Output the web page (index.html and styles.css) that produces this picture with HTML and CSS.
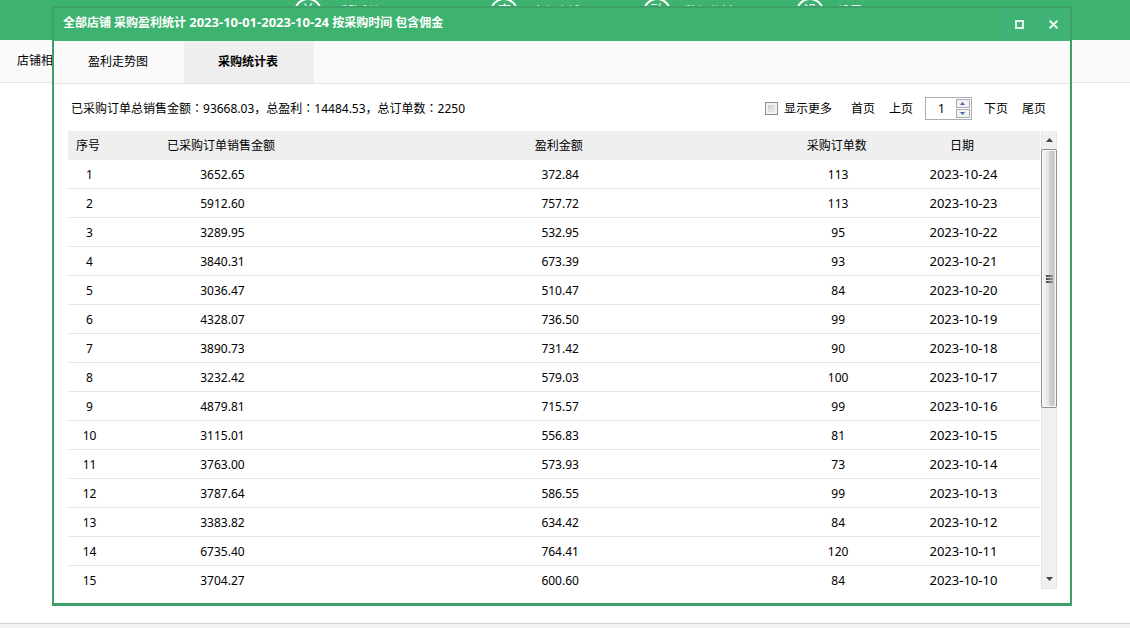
FILE: index.html
```
<!DOCTYPE html>
<html lang="zh-CN">
<head>
<meta charset="utf-8">
<title>采购盈利统计</title>
<link rel="stylesheet" href="styles.css">
</head>
<body>
<div class="app">
  <nav class="topnav">
    <a class="topnav-item" href="#"><span class="badge">关</span>采购利润</a>
    <a class="topnav-item" href="#"><span class="badge">店</span>全部店铺</a>
    <a class="topnav-item" href="#"><span class="badge">动</span>数据分析</a>
    <a class="topnav-item" href="#"><span class="badge">设</span>设置</a>
  </nav>
  <nav class="subnav"><a href="#">店铺相关</a></nav>
  <main class="backdrop"></main>
  <footer class="statusbar"></footer>
</div>

<section class="window" role="dialog" aria-labelledby="win-title">
  <header class="titlebar">
    <h1 id="win-title">全部店铺 采购盈利统计 <span class="date">2023-10-01-2023-10-24</span> 按采购时间 包含佣金</h1>
    <button class="winbtn" type="button" aria-label="最大化"><svg width="9" height="9" viewBox="0 0 9 9"><rect x="1" y="1" width="7" height="7" fill="none" stroke="#e2f5ea" stroke-width="2"/></svg></button>
    <button class="winbtn" type="button" aria-label="关闭"><svg width="9" height="9" viewBox="0 0 9 9"><path d="M.6.6l7.8 7.8M8.4.6L.6 8.4" stroke="#e8f8ee" stroke-width="2"/></svg></button>
  </header>
  <div class="tabs" role="tablist">
    <button class="tab" type="button" role="tab" aria-selected="false">盈利走势图</button>
    <button class="tab active" type="button" role="tab" aria-selected="true">采购统计表</button>
  </div>
  <div class="content">
    <div class="toolbar">
      <p class="summary">已采购订单总销售金额<span class="colon" lang="zh-TW">：</span>93668.03，总盈利<span class="colon" lang="zh-TW">：</span>14484.53，总订单数<span class="colon" lang="zh-TW">：</span>2250</p>
      <label class="more"><input type="checkbox">显示更多</label>
      <div class="pager">
        <a href="#">首页</a>
        <a href="#">上页</a>
        <div class="spinner">
          <input type="text" value="1" aria-label="页码">
          <div class="steps">
            <button type="button" aria-label="增加"><svg width="5" height="3" viewBox="0 0 5 3"><path d="M0 3L2.500 0 5 3z" fill="#4a62a8"/></svg></button>
            <button type="button" aria-label="减少"><svg width="5" height="3" viewBox="0 0 5 3"><path d="M0 0L2.500 3 5 0z" fill="#4a62a8"/></svg></button>
          </div>
        </div>
        <a href="#">下页</a>
        <a href="#">尾页</a>
      </div>
    </div>
    <div class="grid">
      <div class="viewport">
        <table>
          <colgroup><col class="c-no"><col class="c-sales"><col class="c-profit"><col class="c-orders"><col class="c-date"></colgroup>
          <thead><tr><th>序号</th><th>已采购订单销售金额</th><th>盈利金额</th><th>采购订单数</th><th>日期</th></tr></thead>
          <tbody>
            <tr><td>1</td><td>3652.65</td><td>372.84</td><td>113</td><td class="date">2023-10-24</td></tr>
            <tr><td>2</td><td>5912.60</td><td>757.72</td><td>113</td><td class="date">2023-10-23</td></tr>
            <tr><td>3</td><td>3289.95</td><td>532.95</td><td>95</td><td class="date">2023-10-22</td></tr>
            <tr><td>4</td><td>3840.31</td><td>673.39</td><td>93</td><td class="date">2023-10-21</td></tr>
            <tr><td>5</td><td>3036.47</td><td>510.47</td><td>84</td><td class="date">2023-10-20</td></tr>
            <tr><td>6</td><td>4328.07</td><td>736.50</td><td>99</td><td class="date">2023-10-19</td></tr>
            <tr><td>7</td><td>3890.73</td><td>731.42</td><td>90</td><td class="date">2023-10-18</td></tr>
            <tr><td>8</td><td>3232.42</td><td>579.03</td><td>100</td><td class="date">2023-10-17</td></tr>
            <tr><td>9</td><td>4879.81</td><td>715.57</td><td>99</td><td class="date">2023-10-16</td></tr>
            <tr><td>10</td><td>3115.01</td><td>556.83</td><td>81</td><td class="date">2023-10-15</td></tr>
            <tr><td>11</td><td>3763.00</td><td>573.93</td><td>73</td><td class="date">2023-10-14</td></tr>
            <tr><td>12</td><td>3787.64</td><td>586.55</td><td>99</td><td class="date">2023-10-13</td></tr>
            <tr><td>13</td><td>3383.82</td><td>634.42</td><td>84</td><td class="date">2023-10-12</td></tr>
            <tr><td>14</td><td>6735.40</td><td>764.41</td><td>120</td><td class="date">2023-10-11</td></tr>
            <tr><td>15</td><td>3704.27</td><td>600.60</td><td>84</td><td class="date">2023-10-10</td></tr>
          </tbody>
        </table>
      </div>
      <div class="scrollbar" aria-hidden="true">
        <div class="arrow"><svg width="7" height="4" viewBox="0 0 7 4"><path d="M0 4L3.500 0 7 4z" fill="#444"/></svg></div>
        <div class="thumb"><i></i><i></i><i></i></div>
        <div class="track"></div>
        <div class="arrow"><svg width="7" height="4" viewBox="0 0 7 4"><path d="M0 0L3.500 4 7 0z" fill="#444"/></svg></div>
      </div>
    </div>
  </div>
</section>
</body>
</html>
```
FILE: styles.css
```
* {
  box-sizing: border-box;
}

body {
  margin: 0;
  background: #fff;
  color: #000;
  font: 12px/16px "Noto Sans", "Noto Sans CJK SC", sans-serif;
}

a {
  color: inherit;
  text-decoration: none;
}

button,
input {
  margin: 0;
  padding: 0;
  border: 0;
  background: none;
  color: inherit;
  font: inherit;
}

/* Page behind the window */
.app {
  display: flex;
  flex-direction: column;
  height: 100vh;
  overflow: hidden;
}

.topnav {
  display: flex;
  flex: none;
  height: 40px;
  padding-left: 294px;
  background: #3eb370;
  color: #fff;
}

.topnav-item {
  display: flex;
  align-items: flex-start;
  gap: 14px;
  width: 153px;
  padding-top: 4px;
}

.topnav-item:first-child {
  width: 196px;
}

.badge {
  width: 28px;
  height: 28px;
  margin-top: -6px;
  border: 2px solid #fff;
  border-radius: 50%;
  font-size: 14px;
  line-height: 20px;
  text-align: center;
}

.subnav {
  flex: none;
  height: 43px;
  padding: 13px 17px;
  border-bottom: 1px solid #e5e5e5;
  background: #fafafa;
}

.backdrop {
  flex: 1;
}

.statusbar {
  flex: none;
  height: 5px;
  border-top: 1px solid #d0d0d0;
  background: #f2f2f2;
}

/* Floating window */
.window {
  position: absolute;
  top: 6px;
  left: 52px;
  right: 58px;
  border: 2px solid #3ca067;
  border-bottom-width: 3px;
  background: #fff;
}

.titlebar {
  display: flex;
  align-items: center;
  height: 33px;
  padding-left: 9px;
  background: #3eb370;
  color: #fff;
}

.titlebar h1 {
  flex: 1;
  margin: 0 0 4px;
  font-size: 12px;
  line-height: 16px;
}

.date {
  font-size: 13px;
}

.winbtn {
  display: flex;
  align-items: center;
  justify-content: center;
  width: 34px;
  height: 33px;
  background: #3eb375;
}

.tabs {
  display: flex;
  height: 43px;
  border-bottom: 1px solid #e5e5e5;
  background: #fafafa;
}

.tab {
  width: 130px;
  padding-right: 2px;
}

.tab.active {
  background: #efefef;
  font-weight: bold;
}

.content {
  padding: 0 13px 14px 14px;
}

.toolbar {
  display: flex;
  align-items: center;
  height: 47px;
  padding: 2px 11px 0 3px;
}

.summary {
  flex: 1;
  margin: 0;
}

.colon {
  font-family: "Noto Sans CJK TC", sans-serif;
}

.more {
  display: flex;
  align-items: center;
  gap: 6px;
  margin-right: 19px;
}

.more input {
  appearance: none;
  width: 13px;
  height: 13px;
  border: 1px solid #8e8f8f;
  background: linear-gradient(135deg, #c4c8cc, #f6f6f6);
  box-shadow: inset 0 0 0 2px #f2f2f2;
}

.pager {
  display: flex;
  align-items: center;
  gap: 14px;
}

.spinner {
  display: flex;
  width: 47px;
  height: 23px;
  margin: 0 -2px;
  padding: 1px;
  border: 1px solid #abadb3;
  background: #fff;
}

.spinner input {
  flex: 1;
  min-width: 0;
  outline: 0;
  text-align: center;
}

.steps {
  display: flex;
  flex-direction: column;
  gap: 1px;
  width: 14px;
}

.steps button {
  display: flex;
  flex: 1;
  align-items: center;
  justify-content: center;
  border: 1px solid #abadb3;
  background: #f2f2f2;
}

.grid {
  display: flex;
  gap: 1px;
  height: 458px;
}

.viewport {
  flex: 1;
  overflow: hidden;
}

table {
  width: 100%;
  table-layout: fixed;
  border-collapse: separate;
  border-spacing: 0;
}

.c-no {
  width: 46px;
}

.c-sales {
  width: 22%;
}

.c-profit {
  width: 47.5%;
}

.c-orders {
  width: 9.7%;
}

th,
td {
  height: 29px;
  padding: 0;
  text-align: center;
}

th {
  background: #efefef;
  font-weight: normal;
}

td {
  padding: 2px 0 0 3px;
  border-bottom: 1px solid #e5e5e5;
}

td.date {
  padding-top: 0;
}

th:first-child,
td:first-child {
  padding-right: 6px;
}

.scrollbar {
  display: flex;
  flex-direction: column;
  width: 16px;
  border: 1px solid #e6e6e6;
  border-top: 0;
  background: #f0f0f0;
}

.arrow {
  display: flex;
  flex: none;
  align-items: center;
  justify-content: center;
  height: 18px;
}

.thumb {
  display: flex;
  flex: 259;
  flex-direction: column;
  align-items: center;
  justify-content: center;
  gap: 1px;
  margin: 0 -1px;
  border: 1px solid #8f8f8f;
  border-radius: 2px;
  background: linear-gradient(90deg, #f5f5f5, #e6e6e8 45%, #cfcfd4 55%, #c6c6cc 80%, #dcdce0);
  box-shadow: inset 0 0 0 1px #fafafa;
}

.thumb i {
  width: 7px;
  height: 2px;
  background: linear-gradient(90deg, #444, #999);
}

.track {
  flex: 163;
}
```
